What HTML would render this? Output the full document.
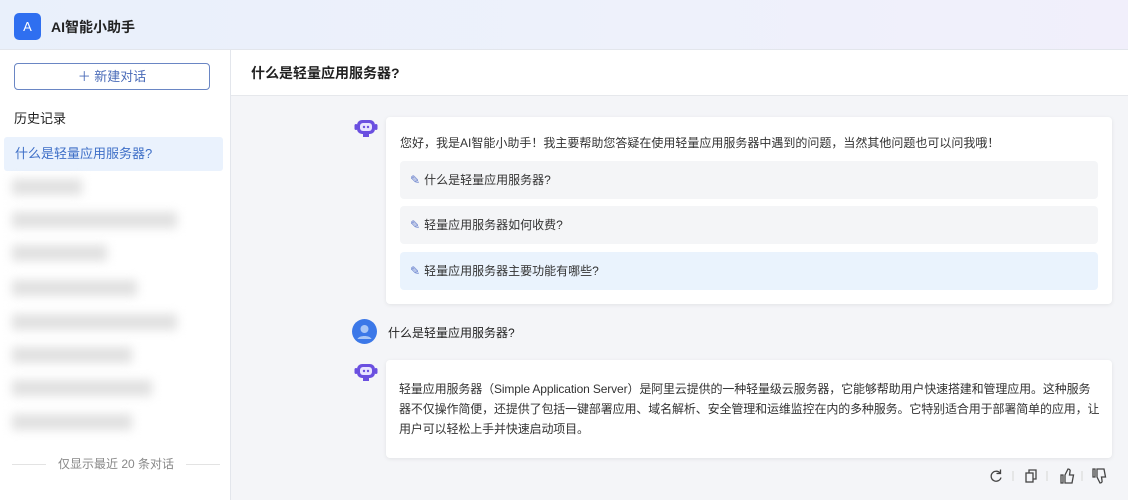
<!DOCTYPE html>
<html><head><meta charset="utf-8"><style>
*{margin:0;padding:0;box-sizing:border-box}
body{width:1128px;height:500px;overflow:hidden;font-family:"Liberation Sans","Noto Sans CJK SC",sans-serif;color:#222;background:#f4f5f8;position:relative}
.hdr{position:absolute;left:0;top:0;width:1128px;height:50px;background:linear-gradient(90deg,#e9f0fb,#eef1fb 60%,#f1effb);border-bottom:1px solid #e3e6ec}
.logo{position:absolute;left:14px;top:13px;width:27px;height:27px;border-radius:5px;background:#2f6ff0;color:#fff;font-size:13px;text-align:center;line-height:27px}
.ttl{position:absolute;left:51px;top:17px;font-size:14px;font-weight:bold}
.side{position:absolute;left:0;top:50px;width:231px;height:450px;background:#fff;border-right:1px solid #e3e6ec}
.nb{position:absolute;left:14px;top:13px;width:196px;height:27px;border:1px solid #6a86c4;border-radius:4px;text-align:center;font-size:13px;color:#4a6bb8;line-height:25px}
.hist{position:absolute;left:14px;top:58px;font-size:13px}
.act{position:absolute;left:4px;top:87px;width:219px;height:34px;background:#eaf2fd;border-radius:3px;font-size:13px;color:#3e6fc7;padding-left:11px;line-height:34px}
.bl{position:absolute;left:12px;height:16px;background:#e0e0e0;filter:blur(5px)}
.foot{position:absolute;left:0;top:405px;width:231px;text-align:center;font-size:12px;color:#888;white-space:nowrap}
.foot:before,.foot:after{content:"";display:inline-block;width:34px;border-top:1px solid #e3e3e3;vertical-align:middle;margin:0 12px}
.mt{position:absolute;left:231px;top:50px;width:897px;height:46px;background:#fff;border-bottom:1px solid #e6e8ec;font-size:14px;font-weight:bold;padding-left:20px;line-height:46px}
.card{position:absolute;left:386px;width:726px;background:#fff;border-radius:4px;box-shadow:0 1px 4px rgba(0,0,0,.08)}
.q{position:absolute;left:14px;width:698px;height:38px;border-radius:4px;background:#f4f5f7;font-size:12px;line-height:38px;padding-left:10px;color:#333}
.q span{color:#5a74c8;font-size:12px;margin-right:4px}
.bot{position:absolute;left:354px;width:24px;height:20px}
</style></head><body>
<div class="hdr"><div class="logo">A</div><div class="ttl">AI智能小助手</div></div>
<div class="side">
<div class="nb">＋ 新建对话</div>
<div class="hist">历史记录</div>
<div class="act">什么是轻量应用服务器?</div>
<div class="bl" style="top:129px;width:70px"></div>
<div class="bl" style="top:162px;width:165px"></div>
<div class="bl" style="top:195px;width:95px"></div>
<div class="bl" style="top:230px;width:125px"></div>
<div class="bl" style="top:264px;width:165px"></div>
<div class="bl" style="top:297px;width:120px"></div>
<div class="bl" style="top:330px;width:140px"></div>
<div class="bl" style="top:364px;width:120px"></div>
<div class="foot">仅显示最近 20 条对话</div>
</div>
<div class="mt">什么是轻量应用服务器?</div>
<svg class="bot" style="top:119px" viewBox="0 0 24 20"><rect x="3" y="1" width="18" height="14" rx="5" fill="#6a4fe0"/><rect x="0.5" y="5" width="3" height="6" rx="1.5" fill="#6a4fe0"/><rect x="20.5" y="5" width="3" height="6" rx="1.5" fill="#6a4fe0"/><rect x="6" y="4" width="12" height="8" rx="3" fill="#e8e4ff"/><circle cx="10" cy="8" r="1.2" fill="#6a4fe0"/><circle cx="14" cy="8" r="1.2" fill="#6a4fe0"/><rect x="9" y="15" width="6" height="3" fill="#6a4fe0"/></svg>
<div class="card" style="top:117px;height:187px">
<div style="position:absolute;left:14px;top:17px;font-size:12px;color:#333">您好，我是AI智能小助手！我主要帮助您答疑在使用轻量应用服务器中遇到的问题，当然其他问题也可以问我哦！</div>
<div class="q" style="top:44px"><span>✎</span>什么是轻量应用服务器?</div>
<div class="q" style="top:89px"><span>✎</span>轻量应用服务器如何收费?</div>
<div class="q" style="top:135px;background:#eaf3fd"><span>✎</span>轻量应用服务器主要功能有哪些?</div>
</div>
<svg style="position:absolute;left:352px;top:319px" width="25" height="25" viewBox="0 0 25 25"><circle cx="12.5" cy="12.5" r="12.5" fill="#3c78e8"/><circle cx="12.5" cy="10" r="4" fill="#a9c6f6"/><path d="M5.5 20c1.5-4 12.5-4 14 0" fill="#a9c6f6"/></svg>
<div style="position:absolute;left:388px;top:324px;font-size:12px">什么是轻量应用服务器?</div>
<svg class="bot" style="top:363px" viewBox="0 0 24 20"><rect x="3" y="1" width="18" height="14" rx="5" fill="#6a4fe0"/><rect x="0.5" y="5" width="3" height="6" rx="1.5" fill="#6a4fe0"/><rect x="20.5" y="5" width="3" height="6" rx="1.5" fill="#6a4fe0"/><rect x="6" y="4" width="12" height="8" rx="3" fill="#e8e4ff"/><circle cx="10" cy="8" r="1.2" fill="#6a4fe0"/><circle cx="14" cy="8" r="1.2" fill="#6a4fe0"/><rect x="9" y="15" width="6" height="3" fill="#6a4fe0"/></svg>
<div class="card" style="top:360px;height:98px">
<div style="position:absolute;left:13px;top:19px;width:700px;font-size:12px;line-height:20px;color:#333;white-space:nowrap;letter-spacing:-0.13px">轻量应用服务器（Simple Application Server）是阿里云提供的一种轻量级云服务器，它能够帮助用户快速搭建和管理应用。这种服务<br>器不仅操作简便，还提供了包括一键部署应用、域名解析、安全管理和运维监控在内的多种服务。它特别适合用于部署简单的应用，让<br>用户可以轻松上手并快速启动项目。</div>
</div>
<svg style="position:absolute;left:986px;top:467px" width="126" height="18" viewBox="0 0 126 18" fill="none" stroke="#444" stroke-width="1.3">
<path d="M14 6a5 5 0 1 0 1 4.5"/><path d="M14.5 2.5v4h-4"/>
<line x1="27" y1="4" x2="27" y2="14" stroke="#ddd"/>
<rect x="40" y="6" width="7" height="9"/><path d="M43 6V3h7v9h-3"/>
<line x1="61" y1="4" x2="61" y2="14" stroke="#ddd"/>
<path d="M75 8h2v8h-2zM79 8l3-6c1.5 0 2.5 1 2 2.5L83.5 8h4l-1.5 8H79z"/>
<line x1="96" y1="4" x2="96" y2="14" stroke="#ddd"/>
<path d="M107 10h2V2h-2zM111 10l3 6c1.5 0 2.5-1 2-2.5L115.5 10h4l-1.5-8H111z"/>
</svg>
</body></html>
